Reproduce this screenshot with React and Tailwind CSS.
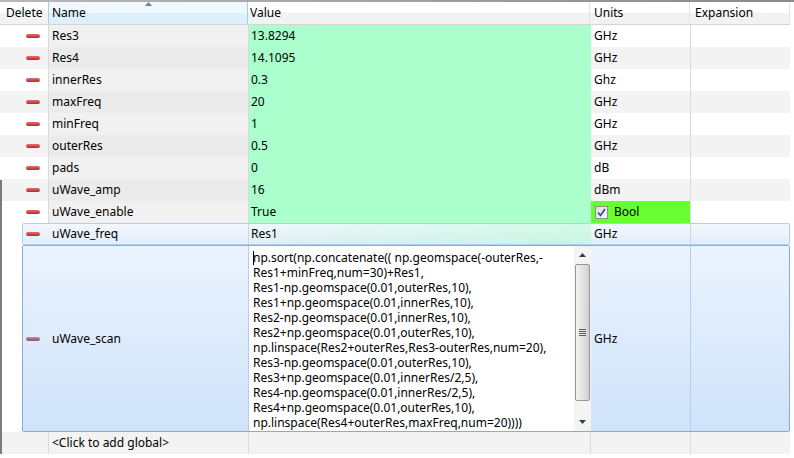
import React from 'react';

const font = "font-['Segoe_UI','Noto_Sans','Open_Sans',sans-serif] text-[12px] text-black";

const rows = [
   { name: 'Res3', value: '13.8294', units: 'GHz' },
   { name: 'Res4', value: '14.1095', units: 'GHz' },
   { name: 'innerRes', value: '0.3', units: 'Ghz' },
   { name: 'maxFreq', value: '20', units: 'GHz' },
   { name: 'minFreq', value: '1', units: 'GHz' },
   { name: 'outerRes', value: '0.5', units: 'GHz' },
   { name: 'pads', value: '0', units: 'dB' },
   { name: 'uWave_amp', value: '16', units: 'dBm' },
   { name: 'uWave_enable', value: 'True', units: 'Bool', bool: true },
];

const scanLines = [
   'np.sort(np.concatenate(( np.geomspace(-outerRes,-',
   'Res1+minFreq,num=30)+Res1,',
   'Res1-np.geomspace(0.01,outerRes,10),',
   'Res1+np.geomspace(0.01,innerRes,10),',
   'Res2-np.geomspace(0.01,innerRes,10),',
   'Res2+np.geomspace(0.01,outerRes,10),',
   'np.linspace(Res2+outerRes,Res3-outerRes,num=20),',
   'Res3-np.geomspace(0.01,outerRes,10),',
   'Res3+np.geomspace(0.01,innerRes/2,5),',
   'Res4-np.geomspace(0.01,innerRes/2,5),',
   'Res4+np.geomspace(0.01,outerRes,10),',
   'np.linspace(Res4+outerRes,maxFreq,num=20))))',
];

function DeleteIcon({ muted }) {
   return (
      <span
         className={`block h-[4px] w-[14px] rounded-[2px] ${
            muted ? 'bg-gradient-to-b from-[#c48aa2] to-[#8e5069]' : 'bg-gradient-to-b from-[#e66d6d] to-[#b2262a]'
         }`}
      />
   );
}

function Checkbox() {
   return (
      <span className="flex h-[13px] w-[13px] items-center justify-center border border-[#8f8f8f] bg-gradient-to-br from-[#dcdcdc] to-[#fafafa]">
         <svg width="9" height="9" viewBox="0 0 9 9">
            <path d="M1 4.5 L3.5 7.5 L8 1" fill="none" stroke="#2a4a8c" strokeWidth="1.6" />
         </svg>
      </span>
   );
}

function Row({ row, shaded }) {
   return (
      <div className={`flex h-[22px] ${shaded ? 'bg-[#f3f3f3]' : 'bg-white'}`}>
         <div className="flex w-[49px] items-center border-r border-[#dadada] pl-[26px]">
            <DeleteIcon />
         </div>
         <div className={`flex w-[200px] items-center border-r border-[#dadada] pl-[3px] ${shaded ? 'bg-[#ebebeb]' : 'bg-[#f1f1f1]'}`}>
            {row.name}
         </div>
         <div className="flex w-[342px] items-center bg-[#aaffcc] pl-[2px]">{row.value}</div>
         {row.bool ? (
            <div className="flex w-[100px] items-center gap-[6px] border-r border-[#dadada] bg-[#66ff33] pl-[4px]">
               <Checkbox />
               <span>{row.units}</span>
            </div>
         ) : (
            <div className="flex w-[100px] items-center border-r border-[#dadada] pl-[3px]">{row.units}</div>
         )}
         <div className="w-[99px]" />
      </div>
   );
}

function Scrollbar() {
   return (
      <div className="flex w-[17px] flex-col bg-[#f4f4f4]">
         <div className="flex h-[18px] items-center justify-center">
            <svg width="7" height="4" viewBox="0 0 7 4">
               <path d="M0 4 L3.5 0 L7 4 Z" fill="#3c3c3c" />
            </svg>
         </div>
         <div className="mx-[1px] flex h-[137px] items-center justify-center rounded-[2px] border border-[#979797] bg-gradient-to-r from-[#f2f2f2] via-[#e4e4e4] to-[#cfcfcf]">
            <div className="flex flex-col gap-[1px]">
               <span className="block h-px w-[7px] bg-[#5e5e5e]" />
               <span className="block h-px w-[7px] bg-[#5e5e5e]" />
               <span className="block h-px w-[7px] bg-[#5e5e5e]" />
               <span className="block h-px w-[7px] bg-[#5e5e5e]" />
            </div>
         </div>
         <div className="flex-1" />
         <div className="flex h-[18px] items-center justify-center">
            <svg width="7" height="4" viewBox="0 0 7 4">
               <path d="M0 0 L3.5 4 L7 0 Z" fill="#3c3c3c" />
            </svg>
         </div>
      </div>
   );
}

export default function App() {
   return (
      <div className={`relative h-[458px] w-[794px] overflow-hidden bg-white ${font}`}>
         <div className="h-[2px] w-full bg-gradient-to-r from-[#b8b8b8] to-[#8a8a8a]" />
         {/* header */}
         <div className="flex h-[23px] w-[790px] border-b border-[#d5d5d5] bg-gradient-to-b from-white from-50% to-[#f1f2f4] to-50%">
            <div className="flex w-[48px] items-center pl-[6px]">Delete</div>
            <div className="relative flex w-[200px] items-center border-x border-[#9fd0ec] bg-gradient-to-b from-[#eef8fe] from-50% to-[#dcf0fc] to-50% pl-[3px]">
               Name
               <svg className="absolute left-[96px] top-0" width="7" height="4" viewBox="0 0 7 4">
                  <path d="M0 4 L3.5 0 L7 4 Z" fill="#5f86a8" />
               </svg>
            </div>
            <div className="flex w-[342px] items-center border-r border-[#e2e2e2] pl-[2px]">Value</div>
            <div className="flex w-[100px] items-center border-r border-[#e2e2e2] pl-[4px]">Units</div>
            <div className="flex w-[100px] items-center border-r border-[#e2e2e2] pl-[5px]">Expansion</div>
         </div>

         <div className="w-[790px]">
            {rows.map((row, i) => (
               <Row key={row.name} row={row} shaded={i % 2 === 1} />
            ))}

            {/* uWave_freq - hover style */}
            <div className="flex h-[22px]">
               <div className="w-[22px] bg-white" />
               <div className="flex flex-1 rounded-[2px] border border-[#b3cfee] bg-gradient-to-b from-[#f4f8fd] to-[#e3edf9]">
                  <div className="flex w-[26px] items-center pl-[3px]">
                     <DeleteIcon />
                  </div>
                  <div className="flex w-[200px] items-center border-r border-[#cad9ea] pl-[3px]">uWave_freq</div>
                  <div className="flex w-[342px] items-center bg-gradient-to-r from-[#aaffcc]/5 to-[#aaffcc]/45 pl-[2px]">Res1</div>
                  <div className="flex w-[100px] items-center border-r border-[#cad9ea] pl-[3px]">GHz</div>
                  <div className="flex-1" />
               </div>
            </div>

            {/* uWave_scan - selected, editing */}
            <div className="flex h-[187px]">
               <div className="w-[22px] bg-white" />
               <div className="flex flex-1 rounded-[2px] border border-[#84acdd] bg-gradient-to-b from-[#ebf3fd] to-[#cfe3fb]">
                  <div className="flex w-[26px] items-center pl-[3px]">
                     <DeleteIcon muted />
                  </div>
                  <div className="flex w-[200px] items-center border-r border-[#b8cde6] pl-[3px]">uWave_scan</div>
                  <div className="flex w-[342px] bg-white">
                     <div className="relative flex-1 pl-[4px] pt-[4px] leading-[15px]">
                        <span className="absolute left-[4px] top-[5px] h-[14px] w-px bg-black" />
                        {scanLines.map((line) => (
                           <div key={line} className="whitespace-pre">
                              {line}
                           </div>
                        ))}
                     </div>
                     <Scrollbar />
                  </div>
                  <div className="flex w-[100px] items-center border-r border-[#b8cde6] pl-[3px]">GHz</div>
                  <div className="flex-1" />
               </div>
            </div>

            {/* add row */}
            <div className="flex h-[22px] bg-[#f3f3f3]">
               <div className="w-[49px] border-r border-[#dadada]" />
               <div className="flex w-[200px] items-center border-r border-[#dadada] pl-[3px]">&lt;Click to add global&gt;</div>
               <div className="w-[342px] border-r border-[#dadada]" />
               <div className="w-[100px] border-r border-[#dadada]" />
               <div className="w-[99px]" />
            </div>
         </div>

         {/* window frame edge showing at the left */}
         <div className="pointer-events-none absolute left-0 top-[180px] h-[274px] w-[2px] bg-[#7c7c7c]" />
      </div>
   );
}
